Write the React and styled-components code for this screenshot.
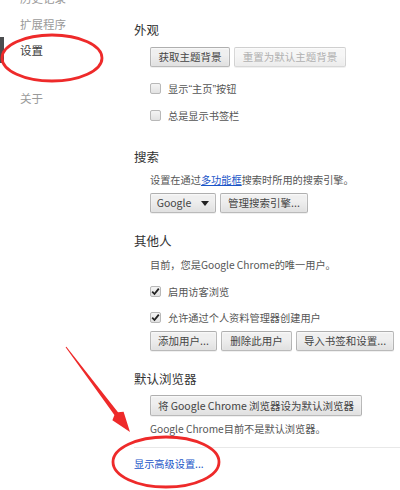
import React from 'react';
import styled, { createGlobalStyle } from 'styled-components';

const Global = createGlobalStyle`
  html, body { margin: 0; padding: 0; background: #fff; }
  body { font-family: "Noto Sans CJK SC", "Noto Sans", sans-serif; }
`;

const Page = styled.div`
  position: relative;
  width: 400px;
  height: 490px;
  overflow: hidden;
  display: flex;
  background: #fff;
`;

const Sidebar = styled.nav`
  width: 134px;
  flex: none;
  display: flex;
  flex-direction: column;
  margin-top: -15px;
`;

const NavItem = styled.div`
  height: 26px;
  line-height: 26px;
  font-size: 11.5px;
  padding-left: 16px;
  border-left: 4px solid ${p => (p.$active ? '#4b4d4f' : 'transparent')};
  color: ${p => (p.$active ? '#3c3c3c' : '#9a9a9a')};
  margin-top: ${p => p.$mt || 0}px;
`;

const Main = styled.main`
  flex: 1;
  display: flex;
  flex-direction: column;
  padding-top: 22px;
`;

const Section = styled.section`
  display: flex;
  flex-direction: column;
  margin-top: ${p => p.$mt || 0}px;
`;

const Heading = styled.h3`
  margin: 0;
  height: 16px;
  line-height: 16px;
  font-size: 12.5px;
  font-weight: normal;
  color: #333;
`;

const Body = styled.div`
  display: flex;
  flex-direction: column;
  padding-left: 16px;
`;

const Row = styled.div`
  display: flex;
  align-items: center;
  gap: 4px;
  margin-top: ${p => p.$mt || 0}px;
`;

const Text = styled.div`
  height: 14px;
  line-height: 14px;
  font-size: 10.2px;
  color: #555;
  white-space: nowrap;
  margin-top: ${p => p.$mt || 0}px;
`;

const Link = styled.a`
  color: #1a55c8;
  text-decoration: ${p => (p.$underline ? 'underline' : 'none')};
`;

const Quote = styled.span`
  font-family: "Liberation Sans", sans-serif;
  font-size: 11px;
  line-height: 1;
`;

const Button = styled.button`
  font-family: inherit;
  font-size: 10.5px;
  height: ${p => p.$h || 20}px;
  width: ${p => (p.$w ? `${p.$w}px` : 'auto')};
  padding: 0 7px;
  margin: 0;
  border: 1px solid rgba(0, 0, 0, 0.22);
  border-radius: 2px;
  background: linear-gradient(#efefef, #efefef 38%, #e0e0e0);
  color: #444;
  box-shadow: 0 1px 0 rgba(0, 0, 0, 0.06), inset 0 1px 2px rgba(255, 255, 255, 0.75);
  line-height: 18px;
  white-space: nowrap;
  display: flex;
  align-items: center;
  justify-content: center;
  gap: 10px;
  &:disabled {
    background: linear-gradient(#f6f6f6, #f6f6f6 38%, #ececec);
    color: #b0b0b0;
    border-color: rgba(0, 0, 0, 0.12);
  }
`;

const Caret = styled.span`
  width: 0;
  height: 0;
  border-left: 4px solid transparent;
  border-right: 4px solid transparent;
  border-top: 5px solid #222;
`;

const CheckRow = styled.label`
  display: flex;
  align-items: center;
  gap: 7px;
  height: 16px;
  font-size: 10.2px;
  color: #555;
  margin-top: ${p => p.$mt || 0}px;
`;

const Box = styled.span`
  width: 11px;
  height: 11px;
  box-sizing: border-box;
  border: 1px solid #b8b8b8;
  border-radius: 2px;
  background: linear-gradient(#f4f4f4, #e2e2e2);
  display: flex;
  align-items: center;
  justify-content: center;
`;

const Divider = styled.hr`
  margin: 11px 0 0 0;
  border: 0;
  border-top: 1px solid #e8e8e8;
  height: 0;
`;

const Overlay = styled.svg`
  position: absolute;
  left: 0;
  top: 0;
  width: 400px;
  height: 490px;
  pointer-events: none;
`;

const Checkbox = ({ checked, children, mt }) => (
  <CheckRow $mt={mt}>
    <Box>
      {checked && (
        <svg width="9" height="9" viewBox="0 0 9 9">
          <path d="M1.2 4.6 L3.5 7 L7.8 1.6" fill="none" stroke="#222" strokeWidth="1.8" />
        </svg>
      )}
    </Box>
    <span>{children}</span>
  </CheckRow>
);

export default function App() {
  return (
    <>
      <Global />
      <Page>
        <Sidebar>
          <NavItem>历史记录</NavItem>
          <NavItem>扩展程序</NavItem>
          <NavItem $active>设置</NavItem>
          <NavItem $mt={22}>关于</NavItem>
        </Sidebar>
        <Main>
          <Section>
            <Heading>外观</Heading>
            <Body>
              <Row $mt={9}>
                <Button $w={80}>获取主题背景</Button>
                <Button $w={112} disabled>重置为默认主题背景</Button>
              </Row>
              <Checkbox mt={13}>
                显示<Quote>“</Quote>主页<Quote>”</Quote>按钮
              </Checkbox>
              <Checkbox mt={11}>总是显示书签栏</Checkbox>
            </Body>
          </Section>
          <Section $mt={26}>
            <Heading>搜索</Heading>
            <Body>
              <Text $mt={8}>
                设置在通过<Link $underline>多功能框</Link>搜索时所用的搜索引擎。
              </Text>
              <Row $mt={6}>
                <Button $w={66}>
                  Google <Caret />
                </Button>
                <Button $w={88}>管理搜索引擎...</Button>
              </Row>
            </Body>
          </Section>
          <Section $mt={20}>
            <Heading>其他人</Heading>
            <Body>
              <Text $mt={9}>目前，您是Google Chrome的唯一用户。</Text>
              <Checkbox checked mt={11}>启用访客浏览</Checkbox>
              <Checkbox checked mt={10}>允许通过个人资料管理器创建用户</Checkbox>
              <Row $mt={6}>
                <Button $w={67}>添加用户...</Button>
                <Button $w={71}>删除此用户</Button>
                <Button $w={98}>导入书签和设置...</Button>
              </Row>
            </Body>
          </Section>
          <Section $mt={20}>
            <Heading>默认浏览器</Heading>
            <Body>
              <Row $mt={8}>
                <Button $w={212} $h={21}>将 Google Chrome 浏览器设为默认浏览器</Button>
              </Row>
              <Text $mt={6}>Google Chrome目前不是默认浏览器。</Text>
            </Body>
          </Section>
          <Divider />
          <Text $mt={9}>
            <Link>显示高级设置...</Link>
          </Text>
        </Main>
        <Overlay viewBox="0 0 400 490">
          <ellipse cx="52" cy="58" rx="50" ry="23" fill="none" stroke="#ee2a2a" strokeWidth="2.8" />
          <ellipse cx="166" cy="462" rx="53" ry="25" fill="none" stroke="#ee2a2a" strokeWidth="2.8" />
          <polygon
            points="66.4,346.7 118,412.3 123.6,411.8 130,432 112.4,420.2 114.4,414.9 65.6,347.3"
            fill="#ee2a2a"
          />
        </Overlay>
      </Page>
    </>
  );
}
